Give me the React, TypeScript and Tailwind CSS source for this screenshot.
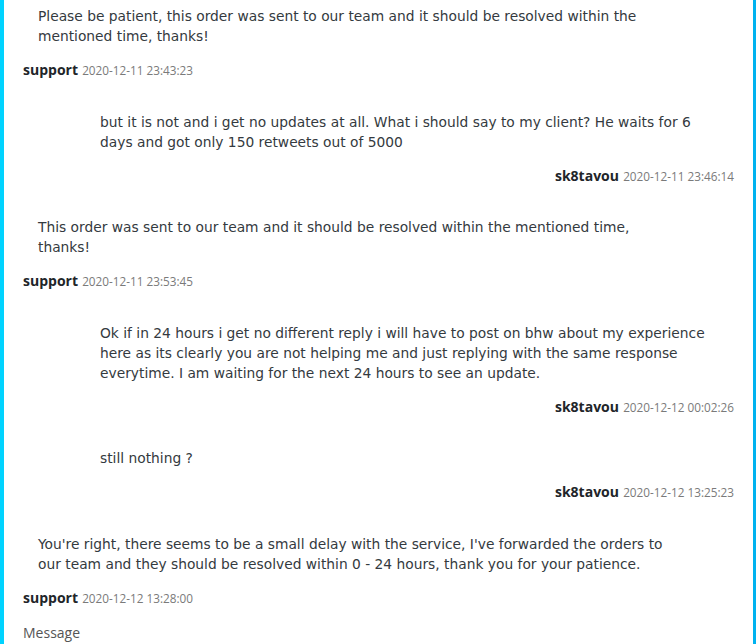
import React from 'react';

type Msg = {
  from: 'support' | 'user';
  author: string;
  time: string;
  text: string;
};

const messages: Msg[] = [
  {
    from: 'support',
    author: 'support',
    time: '2020-12-11 23:43:23',
    text: 'Please be patient, this order was sent to our team and it should be resolved within the mentioned time, thanks!',
  },
  {
    from: 'user',
    author: 'sk8tavou',
    time: '2020-12-11 23:46:14',
    text: 'but it is not and i get no updates at all. What i should say to my client? He waits for 6 days and got only 150 retweets out of 5000',
  },
  {
    from: 'support',
    author: 'support',
    time: '2020-12-11 23:53:45',
    text: 'This order was sent to our team and it should be resolved within the mentioned time, thanks!',
  },
  {
    from: 'user',
    author: 'sk8tavou',
    time: '2020-12-12 00:02:26',
    text: 'Ok if in 24 hours i get no different reply i will have to post on bhw about my experience here as its clearly you are not helping me and just replying with the same response everytime. I am waiting for the next 24 hours to see an update.',
  },
  {
    from: 'user',
    author: 'sk8tavou',
    time: '2020-12-12 13:25:23',
    text: 'still nothing ?',
  },
  {
    from: 'support',
    author: 'support',
    time: '2020-12-12 13:28:00',
    text: "You're right, there seems to be a small delay with the service, I've forwarded the orders to our team and they should be resolved within 0 - 24 hours, thank you for your patience.",
  },
];

const Message = ({ msg }: { msg: Msg }) => {
  const isUser = msg.from === 'user';
  return (
    <div className={`flex flex-col ${isUser ? 'items-end' : 'items-start'}`}>
      <div
        className={`font-['DejaVu_Sans',sans-serif] text-[13.8px] leading-[20px] text-[#343a40] ${
          isUser ? 'w-[615px] mr-[19px]' : 'w-[634px] ml-[15px]'
        }`}
      >
        {msg.text}
      </div>
      <div className="mt-[13px] leading-[20px]">
        <span className="text-[14px] font-bold text-[#212529]">{msg.author}</span>{' '}
        <span className="text-[11.75px] text-[#7a7a7a]">{msg.time}</span>
      </div>
    </div>
  );
};

export default function App() {
  return (
    <div className="h-[644px] overflow-hidden bg-gradient-to-r from-[#00d3ff] to-[#00b2ef] pl-[4px] pr-[3px] font-['Open_Sans',sans-serif]">
      <div className="h-full bg-white px-[19px] pt-[6px]">
        <div className="flex flex-col gap-[31.5px]">
          {messages.map((m, i) => (
            <Message key={i} msg={m} />
          ))}
        </div>
        <div className="mt-[15px] text-[14px] leading-[20px] text-[#555]">Message</div>
      </div>
    </div>
  );
}
